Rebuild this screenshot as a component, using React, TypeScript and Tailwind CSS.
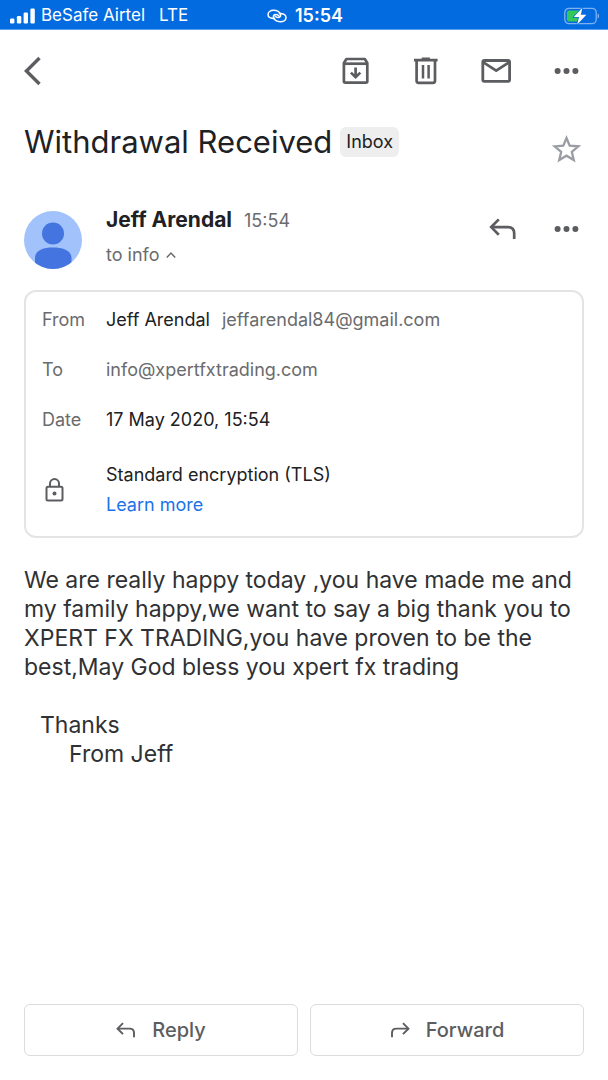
import type { ReactNode } from "react";

function SignalIcon() {
  return (
    <svg viewBox="0 0 25 16" className="h-4 w-[25px]" fill="currentColor" aria-hidden="true">
      <rect x="0" y="10.5" width="4.4" height="5" rx="1.2" />
      <rect x="6.9" y="8" width="4.4" height="7.5" rx="1.2" />
      <rect x="13.6" y="4.5" width="4.4" height="11" rx="1.2" />
      <rect x="20.4" y="0.5" width="4.4" height="15" rx="1.2" />
    </svg>
  );
}

function LinkIcon() {
  return (
    <svg viewBox="0 0 20 14" className="h-[14px] w-5" fill="none" stroke="currentColor" strokeWidth="1.5" strokeLinecap="round" aria-hidden="true">
      <path d="M7.6 9.6C3.8 9.6 1 8.3 1 5.6C1 3 3.4 1.3 6.6 1.3C10.2 1.3 13.6 3.3 13.6 6.1C13.6 7.7 12.5 8.5 11 8.5C9.8 8.5 8.8 8 8.3 7.2" />
      <path d="M12.4 4.4C16.2 4.4 19 5.7 19 8.4C19 11 16.6 12.7 13.4 12.7C9.8 12.7 6.4 10.7 6.4 7.9C6.4 6.3 7.5 5.5 9 5.5C10.2 5.5 11.2 6 11.7 6.8" />
    </svg>
  );
}

function BatteryIcon() {
  return (
    <svg viewBox="0 0 36 18" className="h-[18px] w-9" aria-hidden="true">
      <rect x="0.8" y="1.3" width="31.4" height="15.4" rx="4.2" fill="none" stroke="#7fb0f2" strokeWidth="1.3" />
      <path d="M33.6 6.5C35.6 7 35.6 11 33.6 11.5Z" fill="#7fb0f2" />
      <path d="M5 3.4H15.5V14.6H5Q2.9 14.6 2.9 12.5V5.5Q2.9 3.4 5 3.4Z" fill="#34c759" />
      <path d="M18.4 0.8L9.8 10H15L13.2 17.6L22.4 7.7H16.8Z" fill="#fff" stroke="#036be0" strokeWidth="1.4" paintOrder="stroke" />
    </svg>
  );
}

function BackIcon() {
  return (
    <svg viewBox="0 0 18 30" className="h-[30px] w-[18px]" fill="none" stroke="currentColor" strokeWidth="3.4" aria-hidden="true">
      <path d="M15.5 2L2.4 15L15.5 28" />
    </svg>
  );
}

function ArchiveIcon() {
  return (
    <svg viewBox="0 0 30 30" className="size-[30px]" fill="none" stroke="currentColor" strokeWidth="2.7" strokeLinejoin="round" aria-hidden="true">
      <path d="M2.9 6.9L5.4 3H23.8L26.3 6.9V25.3Q26.3 26.7 24.9 26.7H4.3Q2.9 26.7 2.9 25.3Z" />
      <path d="M3 7.7H26.2" />
      <path d="M14.6 11.5V20.8M9.9 16.6L14.6 21.2L19.3 16.6" strokeLinejoin="miter" />
    </svg>
  );
}

function TrashIcon() {
  return (
    <svg viewBox="0 0 30 30" className="size-[30px]" fill="none" stroke="currentColor" strokeWidth="2.7" aria-hidden="true">
      <path d="M3 4.2H26.6M10.7 2.9H18.9" />
      <path d="M5.6 4.5V24.8Q5.6 26.8 7.6 26.8H22Q24 26.8 24 24.8V4.5" />
      <path d="M12 9V22.4M17.6 9V22.4" strokeWidth="2.5" />
    </svg>
  );
}

function MailIcon() {
  return (
    <svg viewBox="0 0 30 30" className="size-[30px]" fill="none" stroke="currentColor" strokeWidth="2.8" strokeLinejoin="round" aria-hidden="true">
      <rect x="1.8" y="4.5" width="26.8" height="20.8" rx="1.6" />
      <path d="M2.4 6.4L15.2 14.6L28 6.4" />
    </svg>
  );
}

function DotsIcon() {
  return (
    <svg viewBox="0 0 30 30" className="size-[30px]" fill="currentColor" aria-hidden="true">
      <circle cx="6.6" cy="15" r="3" />
      <circle cx="15.5" cy="15" r="3" />
      <circle cx="24.4" cy="15" r="3" />
    </svg>
  );
}

function StarIcon() {
  return (
    <svg viewBox="0 0 30 30" className="size-[30px]" fill="none" stroke="#9a9da3" strokeWidth="2.3" aria-hidden="true">
      <path d="M15.5 4L18.7 11.6L27.3 12.3L20.8 17.8L22.8 26.1L15.5 21.7L8.2 26.1L10.2 17.8L3.7 12.3L12.3 11.6Z" />
    </svg>
  );
}

function ReplyIcon({ className }: { className: string }) {
  return (
    <svg viewBox="0 0 28 22" className={className} fill="none" stroke="currentColor" strokeWidth="2.7" aria-hidden="true">
      <path d="M9.8 1.4L2.2 9.1L9.8 16.8" />
      <path d="M2.4 9.1H19Q25.2 9.1 25.2 15.3V21" />
    </svg>
  );
}

function LockIcon() {
  return (
    <svg viewBox="0 0 20 26" className="h-[26px] w-5" fill="none" stroke="currentColor" strokeWidth="2" aria-hidden="true">
      <rect x="1.5" y="9.8" width="16" height="13.8" rx="1.5" />
      <path d="M5 9.8V6.6A4.5 4.5 0 0 1 14 6.6V9.8" />
      <circle cx="9.5" cy="16.6" r="2" fill="currentColor" stroke="none" />
    </svg>
  );
}

function IconButton({ label, children }: { label: string; children: ReactNode }) {
  return (
    <button type="button" aria-label={label} className="flex shrink-0 items-center justify-center">
      {children}
    </button>
  );
}

function DetailRow({ label, children }: { label: string; children: ReactNode }) {
  return (
    <div className="flex h-[50px] items-center">
      <dt className="w-16 shrink-0 text-[#6a6b6e]">{label}</dt>
      <dd className="flex flex-wrap gap-x-3">{children}</dd>
    </div>
  );
}

export default function App() {
  return (
    <div className="flex min-h-screen flex-col bg-white font-['Inter',sans-serif] text-[#202124]">
      <div className="grid h-[30px] grid-cols-[1fr_auto_1fr] items-center border-b border-[#5c9ff0] bg-[#036be0] pt-[2px] pr-2 pl-[10px] text-[17px] text-white">
        <div className="flex items-center gap-[6px]">
          <SignalIcon />
          <span>BeSafe Airtel</span>
          <span className="pl-2">LTE</span>
        </div>
        <div className="flex items-center gap-2">
          <LinkIcon />
          <span className="text-lg font-semibold">15:54</span>
        </div>
        <div className="flex justify-end">
          <BatteryIcon />
        </div>
      </div>

      <header className="flex h-[82px] items-center justify-between pr-[27px] pl-6 text-[#5c5d60]">
        <IconButton label="Back">
          <BackIcon />
        </IconButton>
        <div className="flex gap-10">
          <IconButton label="Archive">
            <ArchiveIcon />
          </IconButton>
          <IconButton label="Delete">
            <TrashIcon />
          </IconButton>
          <IconButton label="Mark as unread">
            <MailIcon />
          </IconButton>
          <IconButton label="More options">
            <DotsIcon />
          </IconButton>
        </div>
      </header>

      <main className="flex grow flex-col">
        <div className="flex items-start justify-between pt-2 pr-[27px] pl-6">
          <div className="flex items-center gap-2">
            <h1 className="text-[31px] leading-[44px]">Withdrawal Received</h1>
            <span className="rounded-md bg-[#eeeeee] px-[6px] text-lg leading-[30px]">Inbox</span>
          </div>
          <div className="pt-[14px]">
            <IconButton label="Star">
              <StarIcon />
            </IconButton>
          </div>
        </div>

        <div className="flex items-start pt-[46px] pr-[27px] pl-6">
          <svg viewBox="0 0 58 58" className="mt-[1px] size-[58px] shrink-0 rounded-full" aria-hidden="true">
            <rect width="58" height="58" fill="#a1c2fa" />
            <circle cx="29" cy="22.5" r="11" fill="#4374e0" />
            <path d="M11 58V47C11 39.5 19 36.5 29 36.5S47.5 39.5 47.5 47V58Z" fill="#4374e0" />
          </svg>
          <div className="grow pl-6">
            <div className="flex items-baseline gap-3 leading-5">
              <span className="text-[21px] font-bold">Jeff Arendal</span>
              <span className="text-[18px] text-[#6a6b6e]">15:54</span>
            </div>
            <button type="button" className="mt-3 flex items-center gap-[6px] text-lg leading-6 text-[#6a6b6e]">
              to info
              <svg viewBox="0 0 10 8" className="h-2 w-[10px]" fill="none" stroke="currentColor" strokeWidth="1.5" aria-hidden="true">
                <path d="M0.8 6.5L5 2L9.2 6.5" />
              </svg>
            </button>
          </div>
          <div className="flex gap-[34px] pt-1 text-[#5c5d60]">
            <IconButton label="Reply">
              <ReplyIcon className="h-[22px] w-7" />
            </IconButton>
            <IconButton label="More message options">
              <DotsIcon />
            </IconButton>
          </div>
        </div>

        <section className="mx-6 mt-[21px] rounded-xl border-2 border-[#e4e4e6] px-4 pt-[2px] pb-4 text-[18px]">
          <dl>
            <DetailRow label="From">
              <span>Jeff Arendal</span>
              <span className="text-[#6a6b6e]">jeffarendal84@gmail.com</span>
            </DetailRow>
            <DetailRow label="To">
              <span className="text-[#6a6b6e]">info@xpertfxtrading.com</span>
            </DetailRow>
            <DetailRow label="Date">17 May 2020, 15:54</DetailRow>
          </dl>
          <div className="flex items-center pt-4 leading-[30px]">
            <div className="w-16 shrink-0 pl-[3px] text-[#5c5d60]">
              <LockIcon />
            </div>
            <div>
              <p>Standard encryption (TLS)</p>
              <a href="#learn-more" className="block text-[#1a73e8]">
                Learn more
              </a>
            </div>
          </div>
        </section>

        <article className="px-4 pt-7 pl-6 text-[23px] leading-[29px] text-[#303134]">
          <p>
            We are really happy today ,you have made me and my family happy,we want to say a big thank you to XPERT FX
            TRADING,you have proven to be the best,May God bless you xpert fx trading
          </p>
          <p className="pt-[29px] pl-4">Thanks</p>
          <p className="pl-[45px]">From Jeff</p>
        </article>
      </main>

      <footer className="grid grid-cols-2 gap-3 px-6 pb-6 text-xl font-medium text-[#5c5d60]">
        <button type="button" className="flex h-[52px] items-center justify-center gap-4 rounded-md border border-[#dadce0]">
          <ReplyIcon className="h-4 w-5" />
          Reply
        </button>
        <button type="button" className="flex h-[52px] items-center justify-center gap-4 rounded-md border border-[#dadce0]">
          <ReplyIcon className="h-4 w-5 -scale-x-100" />
          Forward
        </button>
      </footer>
    </div>
  );
}
